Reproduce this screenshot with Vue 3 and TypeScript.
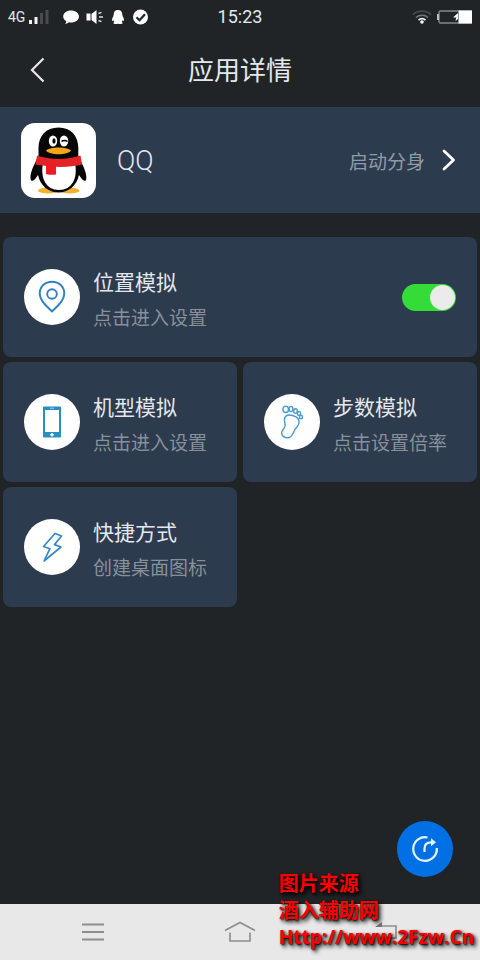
<script setup lang="ts">
import { ref } from 'vue'

interface Feature {
  id: string
  title: string
  hint: string
  wide?: boolean
}

const features: Feature[] = [
  { id: 'location', title: '位置模拟', hint: '点击进入设置', wide: true },
  { id: 'device', title: '机型模拟', hint: '点击进入设置' },
  { id: 'steps', title: '步数模拟', hint: '点击设置倍率' },
  { id: 'shortcut', title: '快捷方式', hint: '创建桌面图标' },
]

const locationEnabled = ref(true)
</script>

<template>
  <div class="screen">
    <div class="status">
      <div class="status-left">
        <span class="network">4G</span>
        <svg class="signal" width="20" height="16" viewBox="0 0 20 16">
          <path d="M0 11h3v4H0zM5.500 8h3v7h-3z" fill="#f4f4f4" />
          <path d="M11 4h3v11h-3zM16.500 1h3v14h-3z" fill="#484b4f" />
        </svg>
        <svg class="notices" width="88" height="16" viewBox="0 0 88 16">
          <g fill="#fff">
            <path d="M8 1.500c4.400 0 8 2.600 8 6s-3.600 6-8 6c-.7 0-1.400 0-2-.2-1 .9-2.200 1.500-3.800 1.500.7-.8 1-1.700 1-2.700C1.300 11 .2 9.400 .2 7.500c0-3.400 3.400-6 7.800-6z" />
            <path d="M23.500 4.500h4v7h-4zM28.500 5 33.500 1v14L28.500 11z" />
            <path d="M35.500 4.500l3-1.200M36 8h4M35.500 11.500l3 1.200" fill="none" stroke="#ddd" stroke-width="1.400" />
            <path d="M55 1c3 0 4.300 2 4.300 4.600 0 .8.200 1.400.5 2 .8 1.300 1.300 2.600 1.100 4-.1.700-.7.500-1.300-.3-.2.800-.5 1.300-1 1.800.7.400 1 .8 1 1.200 0 .8-2.600.9-4.600.5-2 .4-4.600.3-4.600-.5 0-.4.300-.8 1-1.200-.5-.5-.8-1-1-1.800-.6.800-1.200 1-1.300.3-.2-1.400.3-2.700 1.100-4 .3-.6.500-1.200.5-2C50.700 3 52 1 55 1z" />
            <circle cx="77.500" cy="8" r="7.500" />
          </g>
          <path d="M73.500 8.200l3 3 5.500-6" fill="none" stroke="#202427" stroke-width="2.200" />
        </svg>
      </div>
      <time class="clock">15:23</time>
      <div class="status-right">
        <svg width="20" height="16" viewBox="0 0 20 16" fill="none">
          <path d="M1 5.500c5-4.600 13-4.600 18 0" stroke="#45494d" stroke-width="1.800" />
          <path d="M4 8.500c3.400-3 8.600-3 12 0" stroke="#74777a" stroke-width="1.600" />
          <path d="M6.500 11c2-1.600 5-1.600 7 0" stroke="#eee" stroke-width="1.800" />
          <circle cx="10" cy="13" r="1.800" fill="#fff" />
        </svg>
        <svg width="36" height="16" viewBox="0 0 36 16">
          <path d="M4.500 2H35v12H4.500A1.500 1.500 0 0 1 3 12.500v-9A1.500 1.500 0 0 1 4.500 2z" fill="none" stroke="#85888a" stroke-width="1.400" />
          <path d="M2 5v6" stroke="#ccc" stroke-width="1.800" />
          <path d="M22.500 1.500H36v13H22.500z" fill="#fff" />
          <path d="M22 4 17 8.600h3.200L19.500 12l2.500-2z" fill="#fff" />
        </svg>
      </div>
    </div>

    <header class="header">
      <button class="back" type="button" aria-label="返回">
        <svg width="16" height="26" viewBox="0 0 16 26" fill="none">
          <path d="M14.500 1.500 3 13l11.500 11.500" stroke="#e6e8ea" stroke-width="2.200" />
        </svg>
      </button>
      <h1>应用详情</h1>
    </header>

    <section class="app">
      <svg class="logo" width="75" height="75" viewBox="0 0 75 75">
        <rect width="75" height="75" rx="14" fill="#fff" />
        <ellipse cx="27" cy="67.500" rx="10" ry="3" fill="#f3b02c" />
        <ellipse cx="48.500" cy="67.500" rx="10" ry="3" fill="#f3b02c" />
        <path d="M37.500 4.500C25 4.500 17.500 13 17.500 25v8C13.500 41 9 49 9.500 55.500c.3 4 3.500 3 7.500-3.500 2.500 11 10.500 17.500 20.500 17.500S55.500 63 58 52c4 6.500 7 7.500 7.300 3.500.5-6.500-4-14.500-8-22.500v-8C57.300 13 50 4.500 37.500 4.500z" fill="#060606" />
        <path d="M22 40h32c3 15-3 27-16 27S19 55 22 40z" fill="#fff" />
        <path d="M16 32.500c13 4.500 30 4.500 43.500 0l1.500 9c-13 3-25 3.500-46.500 0z" fill="#e42225" />
        <path d="M25 40h10v11.500c-3.500.5-6.500.5-10-.5z" fill="#ed1c24" />
        <ellipse cx="32" cy="18" rx="4.200" ry="5.500" fill="#fff" />
        <ellipse cx="43" cy="18" rx="4.200" ry="5.500" fill="#fff" />
        <ellipse cx="33" cy="18" rx="1.600" ry="2.700" fill="#060606" />
        <path d="M40.500 18.500c1.200-1.400 4.500-1.400 6 0" stroke="#060606" stroke-width="1.500" fill="none" />
        <path d="M25 27.500c4-4 21-4 25 0-3.500 5-21 5-25 0z" fill="#f3a51b" />
      </svg>
      <span class="app-name">QQ</span>
      <button class="launch" type="button">
        <span>启动分身</span>
        <svg width="16" height="24" viewBox="0 0 16 24" fill="none">
          <path d="M3 3l9.500 9L3 21" stroke="#fff" stroke-width="2.800" stroke-linecap="round" stroke-linejoin="round" />
        </svg>
      </button>
    </section>

    <main class="grid">
      <article v-for="item in features" :key="item.id" class="card" :class="{ wide: item.wide }">
        <button class="card-link" type="button">
          <span class="badge">
            <svg v-if="item.id === 'location'" width="28" height="34" viewBox="0 0 28 34" fill="none" stroke="#2f80c2" stroke-width="1.900">
              <path d="M14 31.500C8.500 26 1.700 20.500 1.700 13.500 1.700 6.500 7 1.700 14 1.700s12.300 4.800 12.300 11.800C26.300 20.500 19.500 26 14 31.500z" />
              <circle cx="14" cy="14" r="4.800" />
            </svg>
            <svg v-else-if="item.id === 'device'" width="20" height="32" viewBox="0 0 20 32">
              <path fill-rule="evenodd" d="M2 .5h16a1 1 0 0 1 1 1v29a1 1 0 0 1-1 1H2a1 1 0 0 1-1-1v-29a1 1 0 0 1 1-1zM3 4v22h14V4z" fill="#2b8fbd" />
              <path d="M8 2.200h4" stroke="#9bcce1" stroke-width="1" />
              <path d="M10 27v3.600M8.200 28.800h3.600" stroke="#fff" stroke-width="1.400" />
            </svg>
            <svg v-else-if="item.id === 'steps'" width="24" height="34" viewBox="0 0 24 34" fill="none" stroke="#4a9bcb" stroke-width="1.400">
              <path d="M4.500 13.500C5.500 10 8.500 9.500 12.500 10.500c5 1.200 7 4 6.500 7.500-.4 3-2.500 4-4 6.500-1.800 3-2.500 7.800-7 8.300C4 33 1.500 30.500 1.600 27.500c.1-2.500 3.600-4 3.600-7.500 0-2.500-1.300-4-.7-6.500z" />
              <ellipse cx="5.700" cy="4.300" rx="2.800" ry="3.200" />
              <ellipse cx="11" cy="4" rx="1.900" ry="2.600" />
              <ellipse cx="15.500" cy="6" rx="1.800" ry="2.300" />
              <ellipse cx="19" cy="8.500" rx="1.600" ry="2" />
              <ellipse cx="21" cy="12" rx="1.500" ry="1.800" />
            </svg>
            <svg v-else width="22" height="32" viewBox="0 0 22 32" fill="none" stroke="#3b87c4" stroke-width="1.700" stroke-linejoin="round">
              <path d="M14 2.500 2.500 15.500l6.500 2.200L3 30l17-14-6.500-2.400L20.500 5z" />
            </svg>
          </span>
          <span class="text">
            <span class="title">{{ item.title }}</span>
            <span class="hint">{{ item.hint }}</span>
          </span>
        </button>
        <input
          v-if="item.id === 'location'"
          v-model="locationEnabled"
          class="switch"
          type="checkbox"
          role="switch"
          :aria-label="item.title"
        />
      </article>
    </main>

    <div class="actions">
      <button class="fab" type="button" aria-label="启动">
        <svg width="28" height="28" viewBox="0 0 28 28" fill="none" stroke="#e4f6ff" stroke-width="2.200">
          <path d="M16.500 2.500A11.800 11.800 0 1 0 25.800 13" />
          <path d="M13.500 17v-3.500c0-4 2.500-6.200 7-6.200h2" />
          <path d="M20 3.300 25 7.300l-5 4z" fill="#e4f6ff" stroke="none" />
        </svg>
      </button>
    </div>

    <nav class="nav">
      <button type="button" aria-label="菜单">
        <svg width="24" height="20" viewBox="0 0 24 20" stroke="#8d8d8d" stroke-width="1.800">
          <path d="M1 2.500h22M1 10h22M1 17.500h22" />
        </svg>
      </button>
      <button type="button" aria-label="主页">
        <svg width="34" height="22" viewBox="0 0 34 22" fill="none" stroke="#8d8d8d" stroke-width="1.600">
          <path d="M2 9.500 17 1.500l15 8M7 11.500v8.500h20v-8.500" />
        </svg>
      </button>
      <button type="button" aria-label="后退">
        <svg width="26" height="22" viewBox="0 0 26 22" fill="none" stroke="#8d8d8d" stroke-width="1.600">
          <path d="M8 5h14v12H6" />
          <path d="M8 1v5H1z" fill="#777" stroke="none" />
        </svg>
      </button>
    </nav>

    <div class="watermark">
      <span>图片来源</span>
      <span>酒入辅助网</span>
      <span class="url">Http://www.2Fzw.Cn</span>
    </div>
  </div>
</template>

<style>
body {
  background: #202427;
}
</style>

<style scoped>
.screen {
  position: relative;
  display: flex;
  flex-direction: column;
  min-height: 100vh;
  background: #202427;
  color: #e4e8ec;
  font-family: Roboto, "Noto Sans CJK SC", sans-serif;
}

button {
  padding: 0;
  border: 0;
  background: none;
  color: inherit;
  font: inherit;
  text-align: left;
}

svg {
  display: block;
  flex: none;
}

.status {
  display: grid;
  grid-template-columns: 1fr auto 1fr;
  align-items: center;
  height: 33px;
  padding: 0 8px;
}

.status-left,
.status-right {
  display: flex;
  align-items: center;
}

.status-right {
  justify-content: flex-end;
  gap: 4px;
}

.network {
  font-size: 14px;
}

.signal {
  margin-left: 4px;
}

.notices {
  margin-left: 14px;
}

.clock {
  font-size: 18px;
}

.header {
  display: grid;
  grid-template-columns: 1fr auto 1fr;
  align-items: center;
  height: 74px;
  padding: 0 29px;
}

h1 {
  margin: 0;
  padding-bottom: 4px;
  font-size: 26px;
  font-weight: 400;
}

.app {
  display: flex;
  align-items: center;
  height: 106px;
  padding: 0 23px 0 21px;
  background: #2d3b4e;
}

.app-name {
  flex: 1;
  margin-left: 21px;
  padding-top: 2px;
  font-size: 27px;
  font-weight: 300;
}

.launch {
  display: flex;
  align-items: center;
  gap: 16px;
  color: #919ba6;
  font-size: 19px;
}

.grid {
  display: grid;
  grid-template-columns: 1fr 1fr;
  gap: 5px 6px;
  margin-top: 24px;
  padding: 0 3px;
}

.card {
  display: flex;
  align-items: center;
  height: 120px;
  padding: 0 21px;
  border-radius: 8px;
  background: #2d3b4e;
}

.wide {
  grid-column: 1 / -1;
}

.card-link {
  display: flex;
  flex: 1;
  align-items: center;
  gap: 13px;
}

.badge {
  display: flex;
  flex: none;
  align-items: center;
  justify-content: center;
  width: 56px;
  height: 56px;
  border-radius: 50%;
  background: #fff;
}

.text {
  display: flex;
  flex-direction: column;
  padding-top: 8px;
  line-height: 35px;
  white-space: nowrap;
}

.title {
  font-size: 21px;
}

.hint {
  color: #87909b;
  font-size: 19px;
}

.switch {
  display: flex;
  align-items: center;
  appearance: none;
  width: 54px;
  height: 27px;
  margin: 0;
  padding: 1px;
  border-radius: 14px;
  background: #7b8490;
}

.switch::before {
  width: 25px;
  height: 25px;
  border-radius: 50%;
  background: #ebebeb;
  content: "";
}

.switch:checked {
  justify-content: flex-end;
  background: #35dc38;
}

.actions {
  display: flex;
  flex: 1;
  align-items: flex-end;
  justify-content: flex-end;
  padding: 27px;
}

.fab {
  display: flex;
  align-items: center;
  justify-content: center;
  width: 56px;
  height: 56px;
  border-radius: 50%;
  background: #0270e5;
}

.nav {
  display: grid;
  grid-template-columns: repeat(3, 1fr);
  height: 56px;
  padding: 0 20px;
  background: #e8e8e8;
}

.nav button {
  display: flex;
  align-items: center;
  justify-content: center;
}

.watermark {
  position: absolute;
  right: 6px;
  bottom: 9px;
  display: flex;
  flex-direction: column;
  color: #fa0000;
  font-family: "Open Sans", "Noto Sans CJK SC", sans-serif;
  font-size: 20px;
  font-weight: 700;
  line-height: 27px;
  text-shadow: 1px 1px 2px #000, 3px 3px 4px #000;
}

.url {
  font-size: 19px;
}
</style>
